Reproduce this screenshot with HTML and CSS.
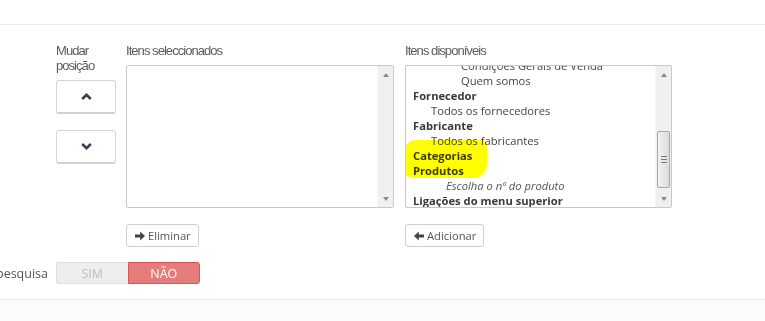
FILE: index.html
```html
<!DOCTYPE html>
<html lang="pt">
<head>
    <meta charset="UTF-8">
    <title>Menu superior</title>
    <link rel="stylesheet" href="styles.css">
</head>
<body>
    <!-- topo -->
    <div class="header"></div>

    <div class="panel">
        <div class="lists">
            <!-- mudar posição -->
            <div class="col col-move">
                <div class="label">Mudar<br>posição</div>
                <button class="btn-move">
                    <svg width="11" height="7" viewBox="0 0 11 7"><path d="M1.2 6 5.5 1.8 9.8 6" fill="none" stroke="#36414d" stroke-width="2.6"/></svg>
                </button>
                <button class="btn-move">
                    <svg width="11" height="7" viewBox="0 0 11 7"><path d="M1.2 1 5.5 5.2 9.8 1" fill="none" stroke="#36414d" stroke-width="2.6"/></svg>
                </button>
            </div>

            <!-- itens seleccionados -->
            <div class="col col-selected">
                <div class="label">Itens seleccionados</div>
                <div class="listbox">
                    <div class="list-items"></div>
                    <div class="scrollbar">
                        <div class="arrow"><span class="tri-up"></span></div>
                        <div class="track"></div>
                        <div class="arrow"><span class="tri-down"></span></div>
                    </div>
                </div>
                <button class="btn">
                    <svg width="12" height="12" viewBox="0 0 12 12"><path d="M1 4.5h5.2V1.4L11 6l-4.8 4.6V7.5H1z" fill="#444"/></svg>
                    Eliminar
                </button>
            </div>

            <!-- itens disponíveis -->
            <div class="col col-available">
                <div class="label">Itens disponíveis</div>
                <div class="listbox">
                    <div class="list-items">
                        <div class="items-scroll">
                            <div class="opt lvl3">Condições Gerais de Venda</div>
                            <div class="opt lvl3">Quem somos</div>
                            <div class="group">Fornecedor</div>
                            <div class="opt lvl1">Todos os fornecedores</div>
                            <div class="group">Fabricante</div>
                            <div class="opt lvl1">Todos os fabricantes</div>
                            <div class="group">Categorias</div>
                            <div class="group">Produtos</div>
                            <div class="opt lvl2 hint">Escolha o nº do produto</div>
                            <div class="group">Ligações do menu superior</div>
                        </div>
                        <div class="marker"></div>
                    </div>
                    <div class="scrollbar">
                        <div class="arrow"><span class="tri-up"></span></div>
                        <div class="track"></div>
                        <div class="thumb"><span></span><span></span><span></span></div>
                        <div class="track-end"></div>
                        <div class="arrow"><span class="tri-down"></span></div>
                    </div>
                </div>
                <button class="btn">
                    <svg width="12" height="12" viewBox="0 0 12 12"><path d="M11 4.5H5.8V1.4L1 6l4.8 4.6V7.5H11z" fill="#444"/></svg>
                    Adicionar
                </button>
            </div>
        </div>

        <!-- pesquisa -->
        <div class="form-row">
            <div class="row-label"><span>pesquisa</span></div>
            <div class="switch">
                <span class="switch-off">SIM</span>
                <span class="switch-on">NÃO</span>
            </div>
        </div>
    </div>

    <div class="footer"></div>
</body>
</html>
```

FILE: styles.css
```css
* {
    margin: 0;
    padding: 0;
    box-sizing: border-box;
}

body {
    font-family: "Open Sans", "DejaVu Sans", sans-serif;
    font-size: 12px;
    color: #555;
    background: #fff;
    width: 765px;
    height: 321px;
    overflow: hidden;
}

/* topo */
.header {
    height: 25px;
    border-bottom: 1px solid #ececec;
}

.panel {
    padding-top: 18px;
}

.lists {
    display: flex;
    margin-left: 56px;
}

.col {
    display: flex;
    flex-direction: column;
    align-items: flex-start;
}

.col-move {
    width: 60px;
    margin-right: 10px;
}

.col-selected {
    width: 268px;
    margin-right: 11px;
}

.col-available {
    width: 267px;
}

.label {
    font-family: "Liberation Sans", Arial, sans-serif;
    font-size: 13px;
    letter-spacing: -0.95px;
    line-height: 15px;
    color: #5c5c5c;
    margin-bottom: 7px;
}

/* botões de posição */
.btn-move {
    width: 60px;
    height: 34px;
    background: #fff;
    border: 1px solid #d6d6d6;
    border-bottom: 2px solid #d0d0d0;
    border-radius: 3px;
    display: flex;
    align-items: center;
    justify-content: center;
    margin-bottom: 16px;
}

/* listas */
.listbox {
    width: 100%;
    height: 143px;
    border: 1px solid #c8c8c8;
    border-radius: 2px;
    display: flex;
    background: #fff;
}

.list-items {
    flex: 1;
    overflow: hidden;
    position: relative;
}

.items-scroll {
    margin-top: -8px;
    font-size: 11.2px;
    line-height: 15px;
    color: #444;
}

.group {
    font-weight: bold;
    color: #3a3a3a;
    padding-left: 7px;
}

.opt {
    white-space: nowrap;
}

.lvl1 { padding-left: 25px; }
.lvl2 { padding-left: 40px; }
.lvl3 { padding-left: 55px; }

.hint {
    font-style: italic;
    color: #555;
}

/* marca amarela sobre "Categorias" */
.marker {
    position: absolute;
    left: -2px;
    top: 74px;
    width: 83px;
    height: 38px;
    background: #ffff00;
    border-radius: 12px 6px 14px 9px;
    mix-blend-mode: multiply;
}

.scrollbar {
    width: 16px;
    display: flex;
    flex-direction: column;
    background: #f0f0f0;
    border-left: 1px solid #f6f6f6;
}

.arrow {
    height: 17px;
    display: flex;
    align-items: center;
    justify-content: center;
}

.tri-up,
.tri-down {
    width: 0;
    height: 0;
    border-left: 3.5px solid transparent;
    border-right: 3.5px solid transparent;
}

.tri-up { border-bottom: 4px solid #8a8a8a; }
.tri-down { border-top: 4px solid #8a8a8a; }

.track {
    flex: 1;
}

.track-end {
    height: 2px;
}

.thumb {
    height: 57px;
    margin: 0 1px;
    border: 1px solid #a8a8a8;
    border-radius: 2px;
    background: linear-gradient(90deg, #f2f2f2, #dcdcdc);
    display: flex;
    flex-direction: column;
    align-items: center;
    justify-content: center;
    gap: 2px;
}

.thumb span {
    width: 6px;
    height: 1px;
    background: #777;
}

/* botões */
.btn {
    margin-top: 16px;
    height: 23px;
    padding: 0 7px;
    background: #fff;
    border: 1px solid #cfcfcf;
    border-radius: 3px;
    font-family: "Open Sans", sans-serif;
    font-size: 11.2px;
    color: #555;
    display: inline-flex;
    align-items: center;
    gap: 2px;
}

/* linha pesquisa */
.form-row {
    display: flex;
    align-items: center;
    margin-top: 15px;
    height: 22px;
}

.row-label {
    width: 48px;
    margin-right: 8px;
    overflow: hidden;
    display: flex;
    justify-content: flex-end;
    white-space: nowrap;
    font-size: 12.5px;
    color: #555;
}

.switch {
    display: flex;
    height: 22px;
    width: 144px;
    font-size: 12.5px;
}

.switch span {
    flex: 1;
    display: flex;
    align-items: center;
    justify-content: center;
}

.switch-off {
    background: #eeeeee;
    border: 1px solid #dedede;
    border-right: none;
    border-radius: 3px 0 0 3px;
    color: #bdbdbd;
}

.switch-on {
    background: #e47c7b;
    border: 1px solid #d9534f;
    border-radius: 0 3px 3px 0;
    color: #fff;
}

.footer {
    margin-top: 15px;
    height: 30px;
    border-top: 1px solid #ececec;
    background: #fafbfc;
}
```
